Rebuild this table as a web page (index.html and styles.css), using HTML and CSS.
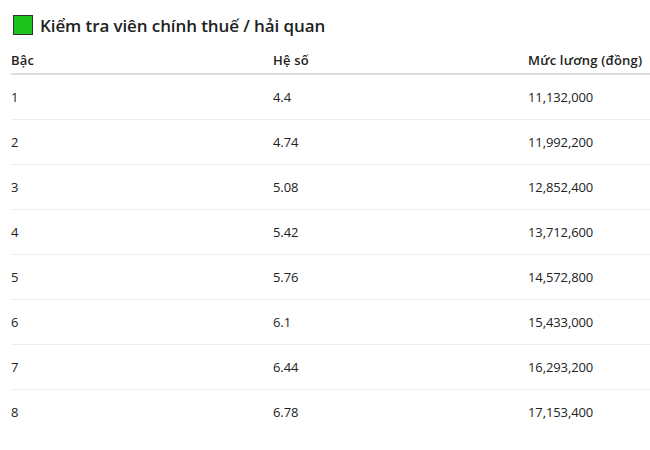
FILE: index.html
```html
<!DOCTYPE html>
<html lang="vi">
<head>
<meta charset="utf-8">
<link rel="stylesheet" href="styles.css">
</head>
<body>
<div class="page">
  <h2 class="title"><span class="swatch"></span>Kiểm tra viên chính thuế / hải quan</h2>
  <table class="salary">
    <thead>
      <tr><th class="c1">Bậc</th><th class="c2">Hệ số</th><th class="c3">Mức lương (đồng)</th></tr>
    </thead>
    <tbody>
      <tr><td>1</td><td>4.4</td><td>11,132,000</td></tr>
      <tr><td>2</td><td>4.74</td><td>11,992,200</td></tr>
      <tr><td>3</td><td>5.08</td><td>12,852,400</td></tr>
      <tr><td>4</td><td>5.42</td><td>13,712,600</td></tr>
      <tr><td>5</td><td>5.76</td><td>14,572,800</td></tr>
      <tr><td>6</td><td>6.1</td><td>15,433,000</td></tr>
      <tr><td>7</td><td>6.44</td><td>16,293,200</td></tr>
      <tr><td>8</td><td>6.78</td><td>17,153,400</td></tr>
    </tbody>
  </table>
</div>
</body>
</html>
```

FILE: styles.css
```css
html, body {
  margin: 0;
  padding: 0;
  background: #fff;
  overflow: hidden;
}
.page {
  padding: 13px 0 0 11px;
  font-family: "Open Sans", "Noto Sans", sans-serif;
  color: #222;
}
.title {
  display: flex;
  align-items: center;
  margin: 0 0 0 2px;
  height: 24px;
  font-size: 17px;
  font-weight: 600;
  letter-spacing: -0.1px;
}
.swatch {
  width: 18px;
  height: 18px;
  background: #1ec31e;
  border: 1px solid #333;
  margin-right: 7px;
}
.salary {
  border-collapse: collapse;
  width: 660px;
  margin-top: 9px;
  font-size: 13px;
}
.salary th {
  text-align: left;
  font-weight: 600;
  padding: 0;
  height: 27px;
  vertical-align: middle;
  border-bottom: 2px solid #ddd;
  letter-spacing: 0.2px;
}
.c1 { width: 262px; }
.c2 { width: 255px; }
.salary td {
  padding: 0;
  height: 44px;
  border-bottom: 1px solid #eee;
  letter-spacing: -0.1px;
}
.salary tbody tr:last-child td {
  border-bottom: none;
}
```
